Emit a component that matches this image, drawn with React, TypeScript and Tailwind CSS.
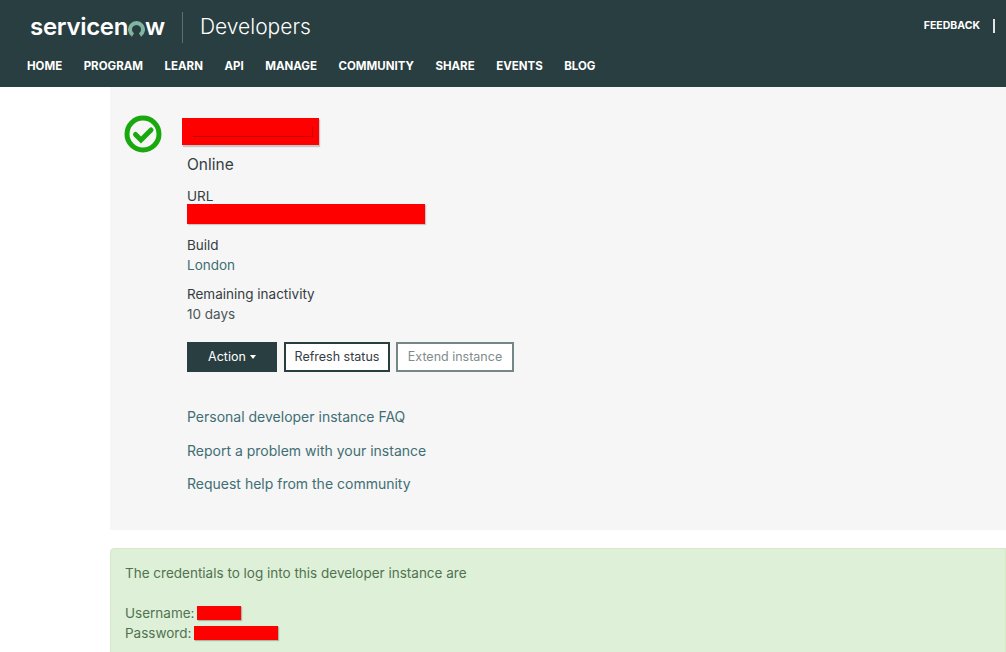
const nav = ["HOME", "PROGRAM", "LEARN", "API", "MANAGE", "COMMUNITY", "SHARE", "EVENTS", "BLOG"];
const links = ["Personal developer instance FAQ", "Report a problem with your instance", "Request help from the community"];

export default function App() {
  return (
    <div className="h-[652px] w-[1006px] overflow-hidden bg-white font-['Inter',sans-serif] text-[#343d42]">
      <header className="flex h-[87px] justify-between bg-[#293e40] text-white">
        <div className="pl-[27px]">
          <div className="flex h-[54px] items-center pl-[3px]">
            <span className="flex items-center text-[24px] font-semibold leading-none tracking-[-0.3px]">
              servicen
              <svg width="17" height="17" viewBox="0 0 17 17" fill="none" className="mt-[3px]">
                <path d="M5 15a6.5 6.5 0 1 1 7 0" stroke="#81b5a1" strokeWidth="4" />
              </svg>
              w
            </span>
            <div className="ml-[17px] mr-[17px] h-[31px] w-px bg-[#5b6e70]" />
            <span className="text-[21px] font-light">Developers</span>
          </div>
          <nav className="mt-[4px] flex gap-[21.5px] text-[11.5px] font-bold">
            {nav.map((n) => <span key={n}>{n}</span>)}
          </nav>
        </div>
        <div className="flex h-[52px] items-center gap-[13px] pr-[11px] text-[10.5px] font-bold">
          <span>FEEDBACK</span>
          <span className="h-[14px] w-[2px] bg-[#dfe3e3]" />
        </div>
      </header>
      <main className="pl-[110px]">
        <section className="h-[443px] bg-[#f6f6f6] pl-[14px] pt-[28px]">
          <div className="flex gap-[25px]">
            <svg width="38" height="38" viewBox="0 0 38 38" fill="none" className="shrink-0">
              <circle cx="19" cy="19" r="16" stroke="#1aa80f" strokeWidth="5" />
              <path d="M11.5 19.5l5.5 5.5 10-10" stroke="#1aa80f" strokeWidth="5" strokeLinecap="round" />
            </svg>
            <div>
              <div className="relative ml-[-5px] mt-[3px] h-[27px] w-[137px] bg-[#ff0000] shadow-[1px_2px_1px_#c8c8c8]">
                <div className="absolute left-[11px] top-[9px] h-[10px] w-[120px] border-b border-r border-[#c40000]" />
              </div>
              <p className="mt-[9px] text-[15.5px] leading-[22px]">Online</p>
              <p className="mt-[10px] text-[13.5px] leading-[20px]">URL</p>
              <div className="mt-[-2px] h-[20px] w-[238px] bg-[#ff0000] shadow-[1px_1px_1px_#c8c8c8]" />
              <p className="mt-[11px] text-[13.5px] leading-[20px]">Build</p>
              <p className="text-[13.5px] leading-[20px] text-[#3f6e74]">London</p>
              <p className="mt-[9px] text-[13.5px] leading-[20px]">Remaining inactivity</p>
              <p className="text-[13.5px] leading-[20px] text-[#4b5558]">10 days</p>
              <div className="mt-[18px] flex text-[12.5px]">
                <button className="flex h-[30px] w-[90px] items-center justify-center gap-[4px] bg-[#293e40] text-white">
                  Action
                  <span className="h-0 w-0 border-x-[3.5px] border-t-[4px] border-x-transparent border-t-white" />
                </button>
                <button className="ml-[7px] h-[30px] w-[106px] border-2 border-[#293e40] bg-white">Refresh status</button>
                <button className="ml-[6px] h-[30px] w-[118px] border-2 border-[#758686] bg-white text-[#7f8c8c]">Extend instance</button>
              </div>
              <div className="mt-[35px] flex flex-col gap-[13.5px] text-[14px] leading-[20px] text-[#3f6e74]">
                {links.map((l) => <span key={l}>{l}</span>)}
              </div>
            </div>
          </div>
        </section>
        <section className="mt-[18px] h-[110px] rounded-l-[4px] border border-[#d6e9c6] bg-[#dff0d8] pl-[14px] pt-[14px] text-[13.5px] leading-[20px] text-[#4f7350]">
          <p>The credentials to log into this developer instance are</p>
          <p className="mt-[20px] flex items-center gap-[3px]">
            Username:
            <span className="h-[14px] w-[44px] bg-[#ff0000] shadow-[1px_1px_1px_#a9b8a4]" />
          </p>
          <p className="flex items-center gap-[3px]">
            Password:
            <span className="h-[14px] w-[84px] bg-[#ff0000] shadow-[1px_1px_1px_#a9b8a4]" />
          </p>
        </section>
      </main>
    </div>
  );
}
